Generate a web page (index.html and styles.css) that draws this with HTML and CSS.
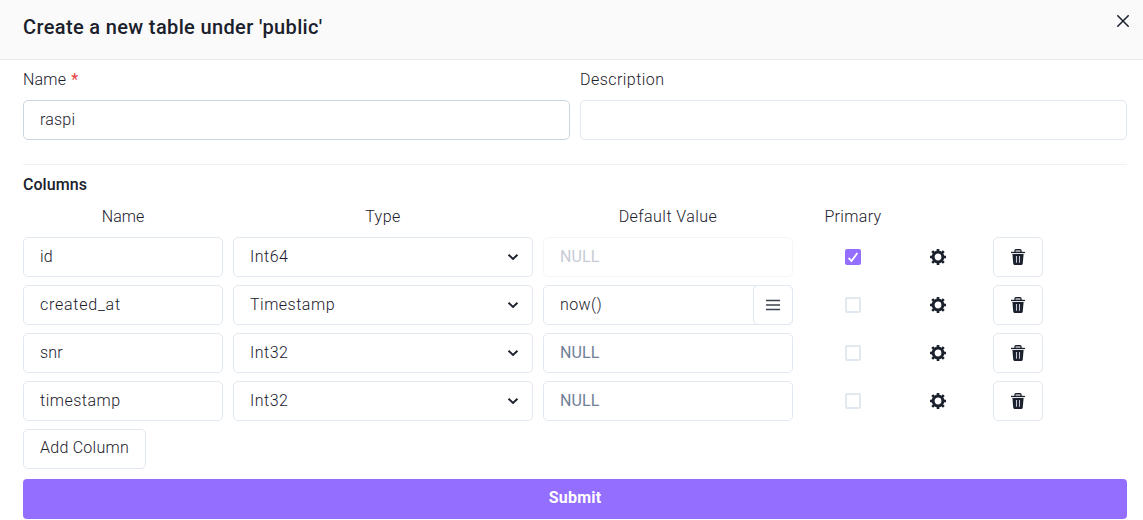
FILE: index.html
```html
<!DOCTYPE html>
<html lang="en">
<head>
<meta charset="utf-8">
<title>Create a new table</title>
<link rel="stylesheet" href="styles.css">
</head>
<body>
<svg class="defs" width="0" height="0" aria-hidden="true">
  <symbol id="chevron" viewBox="0 0 12 12"><path d="M1.5 3.7 6 8l4.5-4.3" fill="none" stroke="currentColor" stroke-width="1.9"/></symbol>
  <symbol id="gear" viewBox="0 0 16 16"><circle cx="8" cy="8" r="4.9" fill="none" stroke="currentColor" stroke-width="3"/><path d="M8 0v3M8 13v3M0 8h3M13 8h3M2.2 2.2l2 2M11.8 11.8l2 2M2.2 13.8l2-2M11.8 4.2l2-2" stroke="currentColor" stroke-width="2.6"/></symbol>
  <symbol id="trash" viewBox="0 0 16 16"><path d="M5 3V1.2L5.8.6h4.4l.8.6V3" fill="#b9bcc3" stroke="currentColor" stroke-width="1.2"/><path d="M1 2.8h14v1.3H1z" fill="currentColor"/><path d="M2.4 5h11.2l-.9 9.9-.9 1.1H4.2l-.9-1.1z" fill="currentColor"/><path d="M6.5 7v6.8M9.5 7v6.8" stroke="#c5c8ce" stroke-width="1.1"/></symbol>
</svg>
<main class="dialog">
  <header class="dialog-header">
    <h1 class="title">Create a new table under 'public'</h1>
    <svg class="close" viewBox="0 0 12 12"><path d="M.3.3l11.4 11.4M11.7.3.3 11.7" stroke="currentColor" stroke-width="1.5"/></svg>
  </header>
  <div class="content">
    <section class="details">
      <div><div class="label">Name <span class="required">*</span></div><div class="field active">raspi</div></div>
      <div><div class="label desc">Description</div><div class="field"></div></div>
    </section>
    <h2 class="subtitle">Columns</h2>
    <div class="grid head"><span>Name</span><span class="type">Type</span><span class="default">Default Value</span><span class="primary">Primary</span></div>
    <div class="rows">
      <div class="grid">
        <div class="field">id</div>
        <div class="field select"><span class="int">Int64</span><svg class="chevron"><use href="#chevron"/></svg></div>
        <div class="field null disabled">NULL</div>
        <span class="check checked"><svg viewBox="0 0 16 16"><path d="M3.6 8.8 6.5 12 12.4 4" fill="none" stroke="#fff" stroke-width="1.8"/></svg></span>
        <svg class="icon"><use href="#gear"/></svg>
        <div class="field delete"><svg class="icon"><use href="#trash"/></svg></div>
      </div>
      <div class="grid">
        <div class="field wide">created_at</div>
        <div class="field select"><span class="stamp">Timestamp</span><svg class="chevron"><use href="#chevron"/></svg></div>
        <div class="field combo"><span class="now">now()</span><span class="menu"><svg viewBox="0 0 14 12"><path d="M0 1.5h14M0 6h14M0 10.5h14" stroke="#3c424d" stroke-width="1.7"/></svg></span></div>
        <span class="check"></span>
        <svg class="icon"><use href="#gear"/></svg>
        <div class="field delete"><svg class="icon"><use href="#trash"/></svg></div>
      </div>
      <div class="grid">
        <div class="field">snr</div>
        <div class="field select"><span class="int">Int32</span><svg class="chevron"><use href="#chevron"/></svg></div>
        <div class="field null">NULL</div>
        <span class="check"></span>
        <svg class="icon"><use href="#gear"/></svg>
        <div class="field delete"><svg class="icon"><use href="#trash"/></svg></div>
      </div>
      <div class="grid">
        <div class="field stamp">timestamp</div>
        <div class="field select"><span class="int">Int32</span><svg class="chevron"><use href="#chevron"/></svg></div>
        <div class="field null">NULL</div>
        <span class="check"></span>
        <svg class="icon"><use href="#gear"/></svg>
        <div class="field delete"><svg class="icon"><use href="#trash"/></svg></div>
      </div>
    </div>
    <button class="add">Add Column</button>
    <button class="submit">Submit</button>
  </div>
</main>
</body>
</html>
```
FILE: styles.css
```css
* { box-sizing: border-box; }
body { margin: 0; background: #fff; color: #1a202c; font: 300 16px/20px Roboto, "Noto Sans", sans-serif; overflow: hidden; }
.defs { display: block; height: 0; }
.dialog { height: 520px; }
.dialog-header { display: flex; justify-content: space-between; align-items: flex-start; height: 60px; padding: 15px 14px 0 23px; background: #fafafa; border-bottom: 1px solid #e9eaec; }
.title { margin: 0; font-size: 20px; line-height: 24px; font-weight: 500; letter-spacing: .36px; }
.close { width: 12px; height: 12px; }
.content { padding: 10px 16px 0 23px; }
.details { display: grid; grid-template-columns: 1fr 1fr; gap: 10px; height: 95px; border-bottom: 1px solid #edf0f5; }
.label { height: 30px; letter-spacing: .2px; }
.desc { letter-spacing: .45px; }
.required { margin-left: 1px; color: #e53e3e; font-weight: 400; }
.field { display: flex; align-items: center; height: 40px; padding: 0 16px; border: 1px solid #e2e8f0; border-radius: 5px; letter-spacing: .2px; }
.active { border-color: #cbd5e0; }
.subtitle { margin: 10px 0 12px; font-size: 16px; line-height: 20px; font-weight: 500; letter-spacing: .05px; }
.grid { display: grid; grid-template-columns: 200px 300px 250px 100px 50px 70px; gap: 10px; align-items: center; justify-items: stretch; }
.head { height: 20px; text-align: center; margin-bottom: 10px; }
.rows { display: grid; gap: 8px; }
.wide { letter-spacing: .75px; }
.int, .type { letter-spacing: .5px; }
.now { letter-spacing: .4px; }
.stamp { letter-spacing: .5px; }
.default { letter-spacing: .45px; }
.primary { letter-spacing: .35px; }
.select { justify-content: space-between; padding-right: 13px; }
.chevron { width: 12px; height: 12px; }
.null { color: #718096; font-weight: 400; letter-spacing: .1px; }
.disabled { opacity: .4; }
.combo { padding-right: 0; justify-content: space-between; }
.menu { display: flex; align-items: center; justify-content: center; width: 40px; height: 40px; margin-right: -1px; border: 1px solid #e2e8f0; border-radius: 5px; flex: none; }
.menu svg { width: 14px; height: 12px; }
.check { width: 16px; height: 16px; border: 2px solid #e2e8f0; border-radius: 2px; justify-self: center; }
.checked { border: 0; background: #936eff; }
.check svg { display: block; width: 16px; height: 16px; }
.icon { display: block; width: 16px; height: 16px; justify-self: center; flex: none; }
.delete { width: 50px; padding: 0; justify-content: center; justify-self: end; }
button { display: block; height: 40px; border-radius: 5px; font: inherit; color: inherit; }
.add { width: 123px; margin: 8px 0 10px; padding: 0 0 2px; border: 1px solid #e2e8f0; background: #fff; letter-spacing: .25px; }
.submit { width: 100%; padding: 0 0 3px; border: 0; border-radius: 4px; background: #936eff; color: #fff; font-weight: 700; letter-spacing: .2px; }
```
